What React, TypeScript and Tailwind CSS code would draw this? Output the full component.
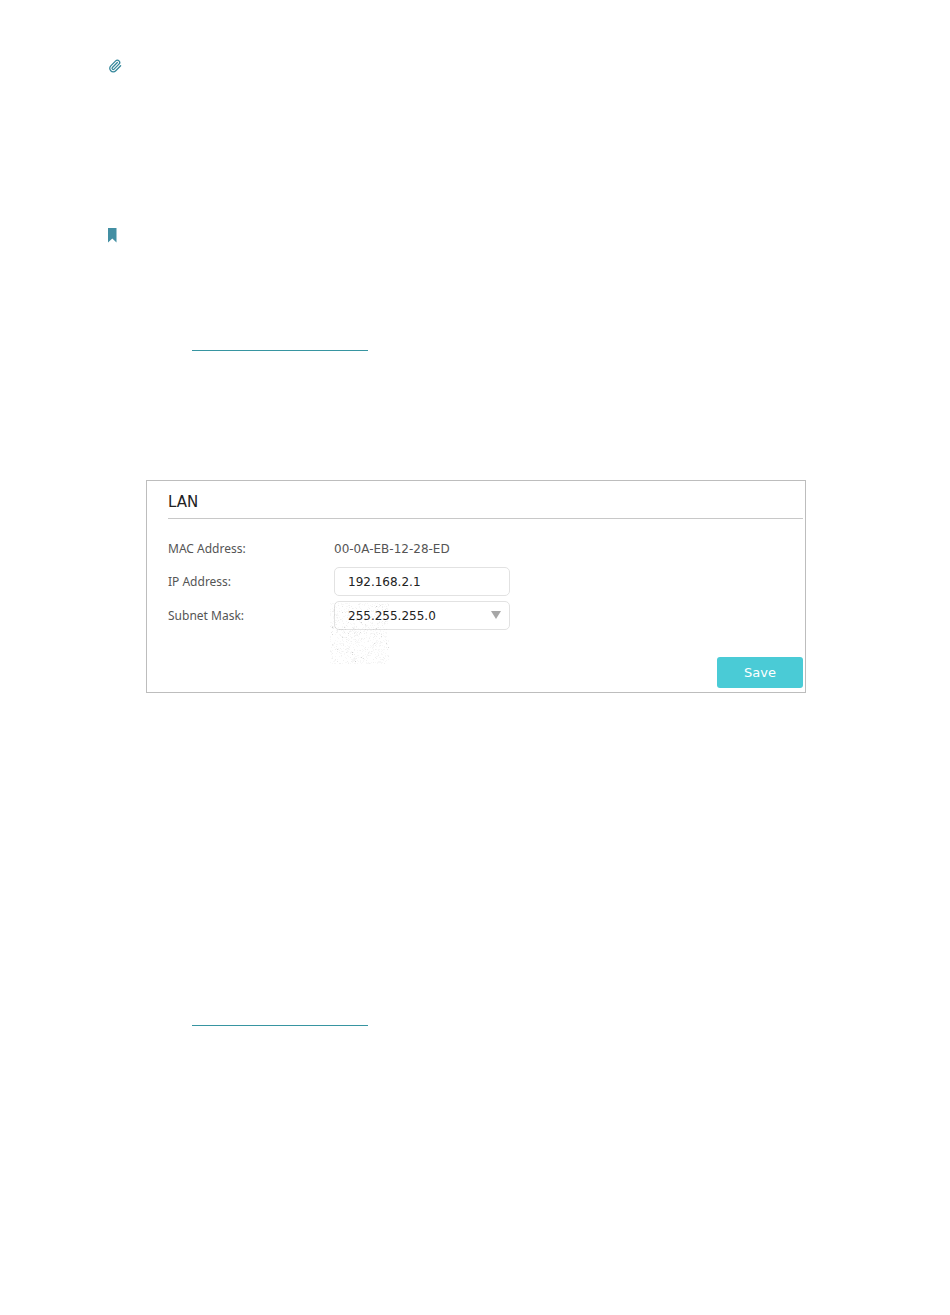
import { useState } from "react";
import { Paperclip } from "lucide-react";

const labelClass = "w-[166px] shrink-0 font-['Noto_Sans',sans-serif] text-[12px] text-[#555]";

const fieldClass =
  "h-[29px] w-full appearance-none rounded-[5px] border border-[#e2e2e2] bg-white px-[13px] text-[12px] text-[#222] outline-none focus:border-[#4acbd6]";

// Small integer hash, so the specks stay the same between renders
function hash(n: number) {
  let h = Math.imul(n + 1, 2654435761);
  h = Math.imul(h ^ (h >>> 15), 2246822519);
  h = Math.imul(h ^ (h >>> 13), 3266489917);
  return ((h ^ (h >>> 16)) >>> 0) / 4294967296;
}

const specks = Array.from({ length: 900 }, (_, i) => ({
  x: Math.floor(hash(i * 2) * 59),
  y: Math.floor(hash(i * 2 + 1) * 61),
  opacity: i % 45 === 0 ? 0.14 : i % 6 === 0 ? 0.06 : 0.03,
}));

function Speckle() {
  return (
    <svg
      aria-hidden="true"
      className="pointer-events-none absolute -left-[4px] top-[2px] h-[61px] w-[59px]"
      viewBox="0 0 59 61"
      shapeRendering="crispEdges"
    >
      {specks.map((s, i) => (
        <rect key={i} x={s.x} y={s.y} width="1" height="1" fill="#000" opacity={s.opacity} />
      ))}
    </svg>
  );
}

function BookmarkIcon() {
  return (
    <svg aria-hidden="true" className="block h-[15px] w-[9px]" viewBox="0 0 9 15" fill="#438fa3">
      <path d="M0 0h8.5v14.5L4.3 10.5 0 14.5z" />
    </svg>
  );
}

export default function App() {
  const [ip, setIp] = useState("192.168.2.1");
  const [mask, setMask] = useState("255.255.255.0");

  return (
    <main className="min-h-screen bg-white pt-[59px] pb-12 font-['DejaVu_Sans',sans-serif]">
      <div className="pl-[108px]">
        <Paperclip aria-hidden="true" className="block h-[14px] w-[14px] text-[#35879b]" strokeWidth={2.2} />
      </div>
      <div className="pt-[155px] pl-[108px]">
        <BookmarkIcon />
      </div>
      <hr className="mt-[107px] ml-[192px] w-[176px] border-t border-[#3795a1]" />

      <form
        onSubmit={(e) => e.preventDefault()}
        className="mt-[129px] mr-[144px] ml-[146px] border border-[#bdbdbd] pr-[2px] pb-[4px] pl-[21px]"
      >
        <h1 className="border-b border-[#c8c8c8] pt-[9px] pb-[4px] text-[15px] leading-[24px] text-[#222]">
          LAN
        </h1>

        <div className="mt-[15px] flex h-[30px] items-center">
          <span className={labelClass}>MAC Address:</span>
          <span className="text-[12px] text-[#555]">00-0A-EB-12-28-ED</span>
        </div>

        <div className="mt-[3px] flex h-[29px] items-center">
          <label htmlFor="ip" className={labelClass}>
            IP Address:
          </label>
          <div className="w-[176px]">
            <input
              id="ip"
              type="text"
              value={ip}
              onChange={(e) => setIp(e.target.value)}
              className={fieldClass}
            />
          </div>
        </div>

        <div className="mt-[5px] flex h-[29px] items-center">
          <label htmlFor="mask" className={labelClass}>
            Subnet Mask:
          </label>
          <div className="relative w-[176px]">
            <select
              id="mask"
              value={mask}
              onChange={(e) => setMask(e.target.value)}
              className={fieldClass}
            >
              <option>255.255.255.0</option>
              <option>255.255.0.0</option>
              <option>255.0.0.0</option>
            </select>
            <svg
              aria-hidden="true"
              className="pointer-events-none absolute top-[10px] right-[9px] h-[8px] w-[10px]"
              viewBox="0 0 10 8"
              fill="#a7a7a7"
            >
              <path d="M0 0h10L5 8z" />
            </svg>
            <Speckle />
          </div>
        </div>

        <div className="mt-[27px] flex justify-end">
          <button
            type="submit"
            className="h-[31px] w-[86px] cursor-pointer rounded-[3px] bg-[#4acbd6] text-[13px] text-white hover:bg-[#3fbfca]"
          >
            Save
          </button>
        </div>
      </form>

      <hr className="mt-[332px] ml-[192px] w-[176px] border-t border-[#3795a1]" />
    </main>
  );
}
